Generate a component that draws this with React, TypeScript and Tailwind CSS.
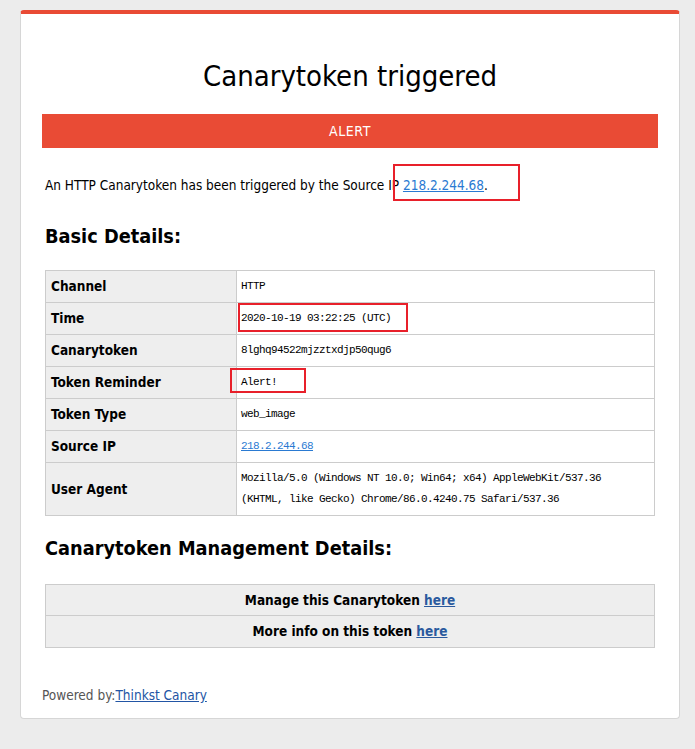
import React from "react";

const rows: { label: string; value: React.ReactNode }[] = [
  { label: "Channel", value: "HTTP" },
  { label: "Time", value: "2020-10-19 03:22:25 (UTC)" },
  { label: "Canarytoken", value: "8lghq94522mjzztxdjp50qug6" },
  { label: "Token Reminder", value: "Alert!" },
  { label: "Token Type", value: "web_image" },
  {
    label: "Source IP",
    value: (
      <a href="#" className="text-[#2a7ad2] underline">
        218.2.244.68
      </a>
    ),
  },
  {
    label: "User Agent",
    value: (
      <>
        Mozilla/5.0 (Windows NT 10.0; Win64; x64) AppleWebKit/537.36
        <br />
        (KHTML, like Gecko) Chrome/86.0.4240.75 Safari/537.36
      </>
    ),
  },
];

export default function App() {
  return (
    <div className="relative min-h-[749px] bg-[#ececec] pt-[10px] pb-[31px] font-['DejaVu_Sans_Condensed','DejaVu_Sans',sans-serif] text-[13.5px] text-black">
      <div className="ml-[20px] mr-[15px] rounded-[4px] border border-[#d6d6d6] border-t-4 border-t-[#e94b35] bg-white px-[21px] pb-[15px]">
        <h1 className="pt-[45px] text-center text-[29px] leading-[34px] font-normal">Canarytoken triggered</h1>

        <div className="mt-[21px] flex h-[34px] items-center justify-center bg-[#e94b35] text-[14px] tracking-[0.6px] text-white">ALERT</div>

        <p className="mx-[3px] mt-[29px] leading-[16px]">
          An HTTP Canarytoken has been triggered by the Source IP{" "}
          <a href="#" className="text-[#2a7ad2] underline">
            218.2.244.68
          </a>
          .
        </p>

        <h2 className="mx-[3px] mt-[32px] text-[19.75px] leading-[24px] font-bold">Basic Details:</h2>

        <table className="mx-[3px] mt-[21px] w-[610px] border-collapse">
          <tbody>
            {rows.map((r) => (
              <tr key={r.label}>
                <td className="h-[32px] w-[191px] border border-[#cccccc] bg-[#eeeeee] pl-[5px] align-middle font-bold">{r.label}</td>
                <td className="border border-[#cccccc] py-[5px] pl-[4px] align-middle font-['Liberation_Mono',monospace] text-[11px] leading-[21px] tracking-[-0.6px]">
                  {r.value}
                </td>
              </tr>
            ))}
          </tbody>
        </table>

        <h2 className="mx-[3px] mt-[21px] text-[19.75px] leading-[24px] font-bold">Canarytoken Management Details:</h2>

        <table className="mx-[3px] mt-[23px] w-[610px] border-collapse">
          <tbody>
            <tr>
              <td className="h-[31px] border border-[#cccccc] bg-[#eeeeee] text-center align-middle font-bold">
                Manage this Canarytoken{" "}
                <a href="#" className="text-[#2a5a9e] underline">
                  here
                </a>
              </td>
            </tr>
            <tr>
              <td className="h-[32px] border border-[#cccccc] bg-[#eeeeee] text-center align-middle font-bold">
                More info on this token{" "}
                <a href="#" className="text-[#2a5a9e] underline">
                  here
                </a>
              </td>
            </tr>
          </tbody>
        </table>

        <p className="mt-[39px] leading-[16px] text-[#555555]">
          Powered by:
          <a href="#" className="text-[#2255a4] underline">
            Thinkst Canary
          </a>
        </p>
      </div>

      {/* red annotation boxes */}
      <div className="pointer-events-none absolute left-[393px] top-[164px] h-[37px] w-[127px] border-2 border-[#e8202a]" />
      <div className="pointer-events-none absolute left-[238px] top-[303px] h-[29px] w-[170px] border-2 border-[#e8202a]" />
      <div className="pointer-events-none absolute left-[230px] top-[368px] h-[25px] w-[76px] border-2 border-[#e8202a]" />
    </div>
  );
}
